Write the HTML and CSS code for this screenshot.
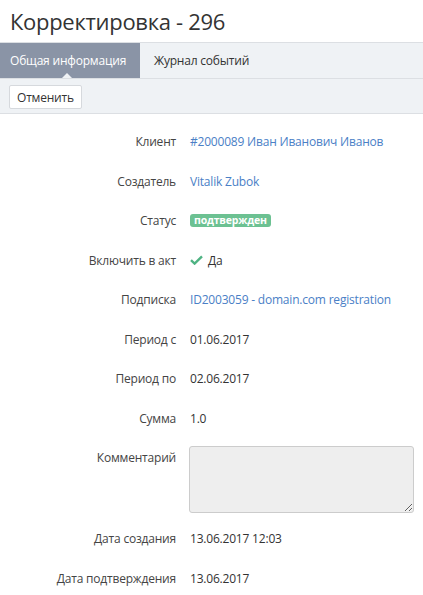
FILE: index.html
```html
<!DOCTYPE html>
<html lang="ru">
<head>
<meta charset="utf-8">
<link rel="stylesheet" href="styles.css">
</head>
<body>
<h1 class="title">Корректировка - 296</h1>
<div class="tabs">
  <div class="tab active">Общая информация</div>
  <div class="tab">Журнал событий</div>
</div>
<div class="toolbar">
  <button class="btn">Отменить</button>
</div>
<div class="details">
  <div class="row"><div class="label">Клиент</div><div class="value"><a class="link">#2000089 Иван Иванович Иванов</a></div></div>
  <div class="row"><div class="label">Создатель</div><div class="value"><a class="link">Vitalik Zubok</a></div></div>
  <div class="row"><div class="label">Статус</div><div class="value"><span class="badge">подтвержден</span></div></div>
  <div class="row"><div class="label">Включить в акт</div><div class="value check-val"><svg class="check" width="13" height="10" viewBox="0 0 13 10"><path d="M1 5.2 L4.6 8.6 L12 1.4" fill="none" stroke="#4fb383" stroke-width="2.4"/></svg>Да</div></div>
  <div class="row"><div class="label">Подписка</div><div class="value"><a class="link">ID2003059 - domain.com registration</a></div></div>
  <div class="row"><div class="label">Период с</div><div class="value">01.06.2017</div></div>
  <div class="row"><div class="label">Период по</div><div class="value">02.06.2017</div></div>
  <div class="row"><div class="label">Сумма</div><div class="value">1.0</div></div>
  <div class="row row-area"><div class="label">Комментарий</div><div class="value"><textarea class="area" disabled></textarea></div></div>
  <div class="row"><div class="label">Дата создания</div><div class="value">13.06.2017 12:03</div></div>
  <div class="row"><div class="label">Дата подтверждения</div><div class="value">13.06.2017</div></div>
</div>
</body>
</html>
```

FILE: styles.css
```css
* { box-sizing: border-box; }
body {
  margin: 0;
  font-family: "Open Sans", "Noto Sans", sans-serif;
  font-size: 12px;
  letter-spacing: -0.2px;
  color: #333;
  background: #fff;
}
.title {
  margin: 0;
  padding: 6px 10px 0;
  height: 42px;
  font-size: 22px;
  font-weight: 400;
  letter-spacing: -0.3px;
  line-height: 30px;
  color: #333;
}
.tabs {
  display: flex;
  height: 37px;
  background: #eff2f5;
  border-top: 1px solid #dcdfe3;
  border-bottom: 1px solid #dcdfe3;
}
.tab {
  position: relative;
  padding: 0 13px;
  line-height: 35px;
  color: #333;
  margin-right: 1px;
}
.tab.active {
  width: 140px;
  padding: 0 10px;
  background: #8a94a6;
  color: #fff;
}
.tab.active::after {
  content: "";
  position: absolute;
  left: 62px;
  bottom: 0;
  border-left: 5px solid transparent;
  border-right: 5px solid transparent;
  border-bottom: 5px solid #eff2f5;
}
.toolbar {
  height: 35px;
  background: #eff2f5;
  border-bottom: 1px solid #dcdfe3;
  padding: 6px 9px;
}
.btn {
  height: 24px;
  padding: 0 7px;
  background: #fff;
  border: 1px solid #d6d9dd;
  border-radius: 2px;
  font: inherit;
  letter-spacing: inherit;
  color: #333;
}
.details {
  padding-top: 8px;
}
.row {
  display: grid;
  grid-template-columns: 176px 1fr;
  column-gap: 14px;
  padding: 10px 0 10px;
  line-height: 19.5px;
}
.label {
  text-align: right;
  color: #444;
}
.value { color: #333; }
.link { color: #4a80c6; text-decoration: none; }
.badge {
  display: inline-block;
  background: #6cc192;
  color: #fff;
  font-weight: 700;
  font-size: 10.5px;
  line-height: 13px;
  padding: 0 4px 0 4px;
  border-radius: 3px;
  vertical-align: 1px;
}
.check-val { display: flex; align-items: center; }
.check { margin-right: 5px; }
.row-area { padding: 8px 0 6px; }
.row-area .label { padding-top: 2px; }
.area {
  display: block;
  width: 225px;
  height: 67px;
  background: #eee;
  border: 1px solid #ccc;
  border-radius: 3px;
  margin-left: -1px;
}
```
